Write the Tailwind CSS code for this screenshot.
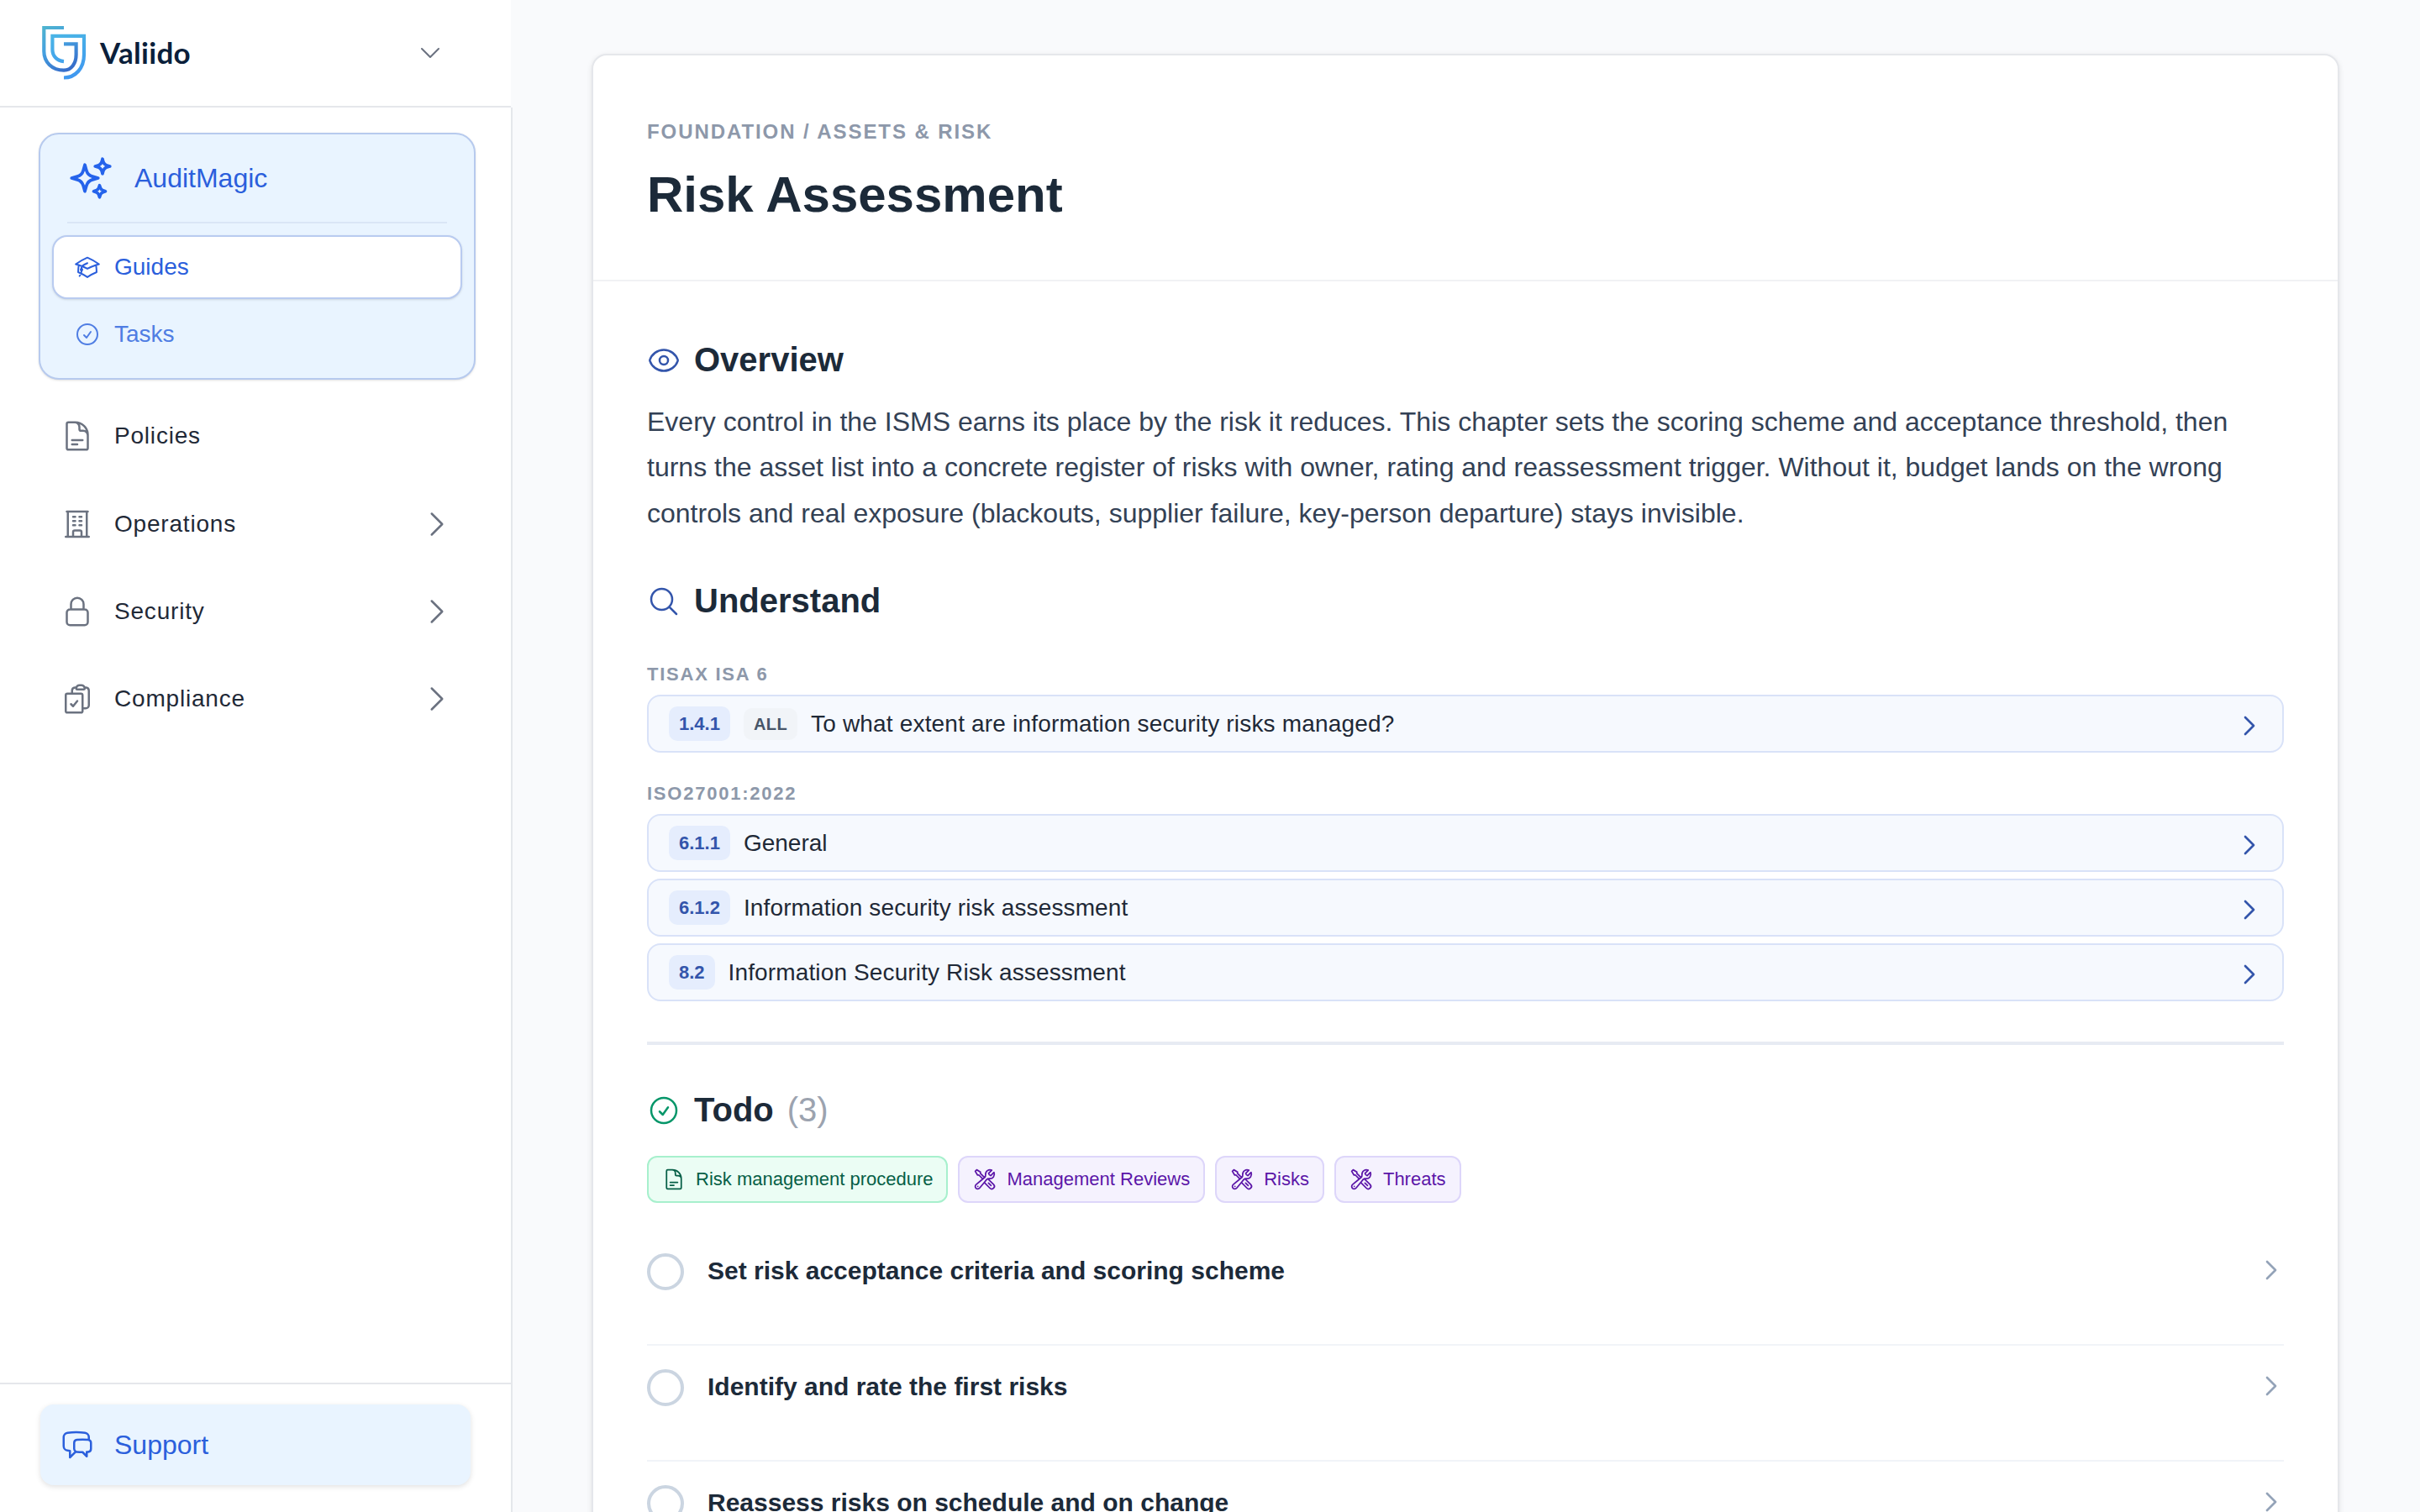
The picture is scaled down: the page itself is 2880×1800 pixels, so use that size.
<!DOCTYPE html>
<html lang="en">
<head>
    <meta charset="UTF-8">
    <meta name="viewport" content="width=device-width, initial-scale=1.0">
    <title>Risk Assessment - Valiido</title>
    <script src="https://cdn.jsdelivr.net/npm/@tailwindcss/browser@4"></script>
</head>
<body class="bg-[#f9fafc] font-['Liberation_Sans',Arial,sans-serif] text-[#1c2a39]">
    <!-- Icon set -->
    <svg class="hidden" xmlns="http://www.w3.org/2000/svg">
        <symbol id="sparkles" viewBox="0 0 24 24"><path d="M9.813 15.904 9 18.75l-.813-2.846a4.5 4.5 0 0 0-3.09-3.09L2.25 12l2.846-.813a4.5 4.5 0 0 0 3.09-3.09L9 5.25l.813 2.846a4.5 4.5 0 0 0 3.09 3.09L15.75 12l-2.846.813a4.5 4.5 0 0 0-3.09 3.09ZM18.259 8.715 18 9.75l-.259-1.035a3.375 3.375 0 0 0-2.455-2.456L14.25 6l1.036-.259a3.375 3.375 0 0 0 2.455-2.456L18 2.25l.259 1.035a3.375 3.375 0 0 0 2.456 2.456L21.75 6l-1.035.259a3.375 3.375 0 0 0-2.456 2.456ZM16.894 20.567 16.5 21.75l-.394-1.183a2.25 2.25 0 0 0-1.423-1.423L13.5 18.75l1.183-.394a2.25 2.25 0 0 0 1.423-1.423l.394-1.183.394 1.183a2.25 2.25 0 0 0 1.423 1.423l1.183.394-1.183.394a2.25 2.25 0 0 0-1.423 1.423Z"/></symbol>
        <symbol id="cap" viewBox="0 0 24 24"><path d="M4.26 10.147a60.438 60.438 0 0 0-.491 6.347A48.62 48.62 0 0 1 12 20.904a48.62 48.62 0 0 1 8.232-4.41 60.46 60.46 0 0 0-.491-6.347m-15.482 0a50.636 50.636 0 0 0-2.658-.813A59.906 59.906 0 0 1 12 3.493a59.903 59.903 0 0 1 10.399 5.84c-.896.248-1.783.52-2.658.814m-15.482 0A50.717 50.717 0 0 1 12 13.489a50.702 50.702 0 0 1 7.74-3.342M6.75 15a.75.75 0 1 0 0-1.5.75.75 0 0 0 0 1.5Zm0 0v-3.675A55.378 55.378 0 0 1 12 8.443m-7.007 11.55A5.981 5.981 0 0 0 6.75 15.75v-1.5"/></symbol>
        <symbol id="check" viewBox="0 0 24 24"><path d="M9 12.75 11.25 15 15 9.75M21 12a9 9 0 1 1-18 0 9 9 0 0 1 18 0Z"/></symbol>
        <symbol id="doc" viewBox="0 0 24 24"><path d="M19.5 14.25v-2.625a3.375 3.375 0 0 0-3.375-3.375h-1.5A1.125 1.125 0 0 1 13.5 7.125v-1.5a3.375 3.375 0 0 0-3.375-3.375H8.25m0 12.75h7.5m-7.5 3H12M10.5 2.25H5.625c-.621 0-1.125.504-1.125 1.125v17.25c0 .621.504 1.125 1.125 1.125h12.75c.621 0 1.125-.504 1.125-1.125V11.25a9 9 0 0 0-9-9Z"/></symbol>
        <symbol id="building" viewBox="0 0 24 24"><path d="M3.75 21h16.5M4.5 3h15M5.25 3v18m13.5-18v18M9 6.75h1.5m-1.5 3h1.5m-1.5 3h1.5m3-6H15m-1.5 3H15m-1.5 3H15M9 21v-3.375c0-.621.504-1.125 1.125-1.125h3.75c.621 0 1.125.504 1.125 1.125V21"/></symbol>
        <symbol id="lock" viewBox="0 0 24 24"><path d="M16.5 10.5V6.75a4.5 4.5 0 1 0-9 0v3.75m-.75 11.25h10.5a2.25 2.25 0 0 0 2.25-2.25v-6.75a2.25 2.25 0 0 0-2.25-2.25H6.75a2.25 2.25 0 0 0-2.25 2.25v6.75a2.25 2.25 0 0 0 2.25 2.25Z"/></symbol>
        <symbol id="clipboard" viewBox="0 0 24 24"><path d="M11.35 3.836c-.065.21-.1.433-.1.664 0 .414.336.75.75.75h4.5a.75.75 0 0 0 .75-.75 2.25 2.25 0 0 0-.1-.664m-5.8 0A2.251 2.251 0 0 1 13.5 2.25H15c1.012 0 1.867.668 2.15 1.586m-5.8 0c-.376.023-.75.05-1.124.08C9.095 4.01 8.25 4.973 8.25 6.108V8.25m8.9-4.414c.376.023.75.05 1.124.08 1.131.094 1.976 1.057 1.976 2.192V16.5A2.25 2.25 0 0 1 18 18.75h-2.25m-7.5-10.5H4.875c-.621 0-1.125.504-1.125 1.125v11.25c0 .621.504 1.125 1.125 1.125h9.75c.621 0 1.125-.504 1.125-1.125V18.75m-7.5-10.5h6.375c.621 0 1.125.504 1.125 1.125v9.375m-8.25-3 1.5 1.5 3-3.75"/></symbol>
        <symbol id="chat" viewBox="0 0 24 24"><path d="M20.25 8.511c.884.284 1.5 1.128 1.5 2.097v4.286c0 1.136-.847 2.1-1.98 2.193-.34.027-.68.052-1.02.072v3.091l-3-3c-1.354 0-2.694-.055-4.02-.163a2.115 2.115 0 0 1-.825-.242m9.345-8.334a2.126 2.126 0 0 0-.476-.095 48.64 48.64 0 0 0-8.048 0c-1.131.094-1.976 1.057-1.976 2.192v4.286c0 .837.46 1.58 1.155 1.951m9.345-8.334V6.637c0-1.621-1.152-3.026-2.76-3.235A48.455 48.455 0 0 0 11.25 3c-2.115 0-4.198.137-6.24.402-1.608.209-2.76 1.614-2.76 3.235v6.226c0 1.621 1.152 3.026 2.76 3.235.577.075 1.157.14 1.74.194V21l4.155-4.155"/></symbol>
        <symbol id="eye" viewBox="0 0 24 24"><path d="M2.036 12.322a1.012 1.012 0 0 1 0-.639C3.423 7.51 7.36 4.5 12 4.5c4.638 0 8.573 3.007 9.963 7.178.07.207.07.431 0 .639C20.577 16.49 16.64 19.5 12 19.5c-4.638 0-8.573-3.007-9.963-7.178Z"/><path d="M15 12a3 3 0 1 1-6 0 3 3 0 0 1 6 0Z"/></symbol>
        <symbol id="search" viewBox="0 0 24 24"><path d="m21 21-5.197-5.197m0 0A7.5 7.5 0 1 0 5.196 5.196a7.5 7.5 0 0 0 10.607 10.607Z"/></symbol>
        <symbol id="tools" viewBox="0 0 24 24"><path d="M11.42 15.17 17.25 21A2.652 2.652 0 0 0 21 17.25l-5.877-5.877M11.42 15.17l2.496-3.03c.317-.384.74-.626 1.208-.766M11.42 15.17l-4.655 5.653a2.548 2.548 0 1 1-3.586-3.586l6.837-5.63m5.108-.233c.55-.164 1.163-.188 1.743-.14a4.5 4.5 0 0 0 4.486-6.336l-3.276 3.277a3.004 3.004 0 0 1-2.25-2.25l3.276-3.276a4.5 4.5 0 0 0-6.336 4.486c.091 1.076-.071 2.264-.904 2.95l-.102.085m-1.745 1.437L5.909 7.5H4.5L2.25 3.75l1.5-1.5L7.5 4.5v1.409l4.26 4.26m-1.745 1.437 1.745-1.437m6.615 8.206L15.75 15.75M4.867 19.125h.008v.008h-.008v-.008Z"/></symbol>
        <symbol id="right" viewBox="0 0 24 24"><path d="m8.25 4.5 7.5 7.5-7.5 7.5"/></symbol>
        <symbol id="down" viewBox="0 0 24 24"><path d="m19.5 8.25-7.5 7.5-7.5-7.5"/></symbol>
    </svg>

    <div class="flex h-[1800px] w-[2880px] overflow-hidden [&_svg]:shrink-0 [&_svg]:[stroke-linecap:round] [&_svg]:[stroke-linejoin:round]">
        <!-- Sidebar -->
        <aside class="flex w-[610px] shrink-0 flex-col">
            <div class="flex h-32 w-[608px] items-start justify-between border-b-2 border-[#e5e7eb] bg-white pr-20 pl-12">
                <div class="flex items-start gap-[14px] pt-7">
                    <svg class="h-[70px] w-14" viewBox="48 28 56 70" fill="none" stroke-width="4.2" style="stroke-linecap:butt;stroke-linejoin:miter">
                        <defs>
                            <linearGradient id="g1" gradientUnits="userSpaceOnUse" x1="52" y1="31" x2="84" y2="84">
                                <stop offset="0" stop-color="#4fb4cf"/>
                                <stop offset=".45" stop-color="#45a0e0"/>
                                <stop offset="1" stop-color="#3569c8"/>
                            </linearGradient>
                            <linearGradient id="g2" gradientUnits="userSpaceOnUse" x1="70" y1="41" x2="84" y2="94">
                                <stop offset="0" stop-color="#4ab4e6"/>
                                <stop offset="1" stop-color="#3f97f0"/>
                            </linearGradient>
                        </defs>
                        <path stroke="url(#g1)" d="M76 33H52.3V61C52.3 74 62 83.6 76 83.6C85 83.6 90.6 75.500 90.6 65V52.300H76"/>
                        <path stroke="url(#g2)" d="M76 73.200C68 72.500 62.400 67 62.400 59V42.900H100V65C100 81 90 92.500 76 92.500"/>
                    </svg>
                    <span class="pt-2.5 pl-px font-['Lato',sans-serif] text-[35px] leading-[48px] font-bold tracking-[0.3px] text-[#0b1f3b]">Valiido</span>
                </div>
                <svg class="mt-[47px] size-8 text-[#6b7280]" fill="none" stroke="currentColor" stroke-width="1.5"><use href="#down"/></svg>
            </div>

            <div class="flex flex-1 flex-col border-r-2 border-[#e5e7eb] bg-white">
                <nav class="flex flex-1 flex-col pt-[30px]">
                    <div class="mr-[42px] ml-[46px] h-[294px] rounded-[24px] border-2 border-[#b7caee] bg-[#e9f4ff] px-[14px] text-[#2b5fdc] shadow-sm">
                        <div class="mx-[18px] flex h-[106px] items-center gap-6 border-b-2 border-[#dae6f6] text-[32px]">
                            <svg class="size-14 text-[#2563eb]" fill="none" stroke="currentColor" stroke-width="1.6"><use href="#sparkles"/></svg>
                            AuditMagic
                        </div>
                        <a class="mt-[14px] flex h-19 items-center gap-4 rounded-[18px] border-2 border-[#b9cbf0] bg-white px-6 text-[28px] shadow-sm">
                            <svg class="size-8" fill="none" stroke="currentColor" stroke-width="1.5"><use href="#cap"/></svg>
                            Guides
                        </a>
                        <a class="mt-1 flex h-19 items-center gap-4 px-[26px] text-[28px] text-[#4f7de3]">
                            <svg class="size-8" fill="none" stroke="currentColor" stroke-width="1.5"><use href="#check"/></svg>
                            Tasks
                        </a>
                    </div>

                    <div class="mt-[15px] flex flex-col pr-[68px] pl-18 text-[28px] tracking-[0.8px] text-[#1f2937] [&_svg]:text-[#6b7280]">
                        <a class="mb-px flex h-26 items-center gap-6">
                            <svg class="size-10" fill="none" stroke="currentColor" stroke-width="1.5"><use href="#doc"/></svg>
                            Policies
                        </a>
                        <a class="flex h-26 items-center gap-6">
                            <svg class="size-10" fill="none" stroke="currentColor" stroke-width="1.5"><use href="#building"/></svg>
                            Operations
                            <svg class="ml-auto size-10" fill="none" stroke="currentColor" stroke-width="1.5"><use href="#right"/></svg>
                        </a>
                        <a class="flex h-26 items-center gap-6">
                            <svg class="size-10" fill="none" stroke="currentColor" stroke-width="1.5"><use href="#lock"/></svg>
                            Security
                            <svg class="ml-auto size-10" fill="none" stroke="currentColor" stroke-width="1.5"><use href="#right"/></svg>
                        </a>
                        <a class="flex h-26 items-center gap-6">
                            <svg class="size-10" fill="none" stroke="currentColor" stroke-width="1.5"><use href="#clipboard"/></svg>
                            Compliance
                            <svg class="ml-auto size-10" fill="none" stroke="currentColor" stroke-width="1.5"><use href="#right"/></svg>
                        </a>
                    </div>
                </nav>

                <div class="h-[154px] border-t-2 border-[#e5e7eb] px-12 pt-6">
                    <a class="flex h-24 items-center gap-6 rounded-2xl bg-[#e9f4ff] px-6 text-[32px] text-[#2b5fdc] shadow-[0_2px_6px_rgba(0,0,0,0.12)]">
                        <svg class="size-10" fill="none" stroke="currentColor" stroke-width="1.5"><use href="#chat"/></svg>
                        Support
                    </a>
                </div>
            </div>
        </aside>

        <!-- Content -->
        <main class="flex-1 pt-16 pr-24 pl-[94px]">
            <article class="h-[1900px] rounded-[18px] border-2 border-[#e5e7eb] bg-white shadow-[0_2px_6px_rgba(0,0,0,0.10)]">
                <header class="h-[269px] border-b-2 border-[#f1f2f4] px-16 pt-[73px]">
                    <p class="text-2xl leading-9 font-bold tracking-[0.08em] text-[#8d98aa]">FOUNDATION / ASSETS &amp; RISK</p>
                    <h1 class="mt-[21px] text-[60px] leading-[72px] font-bold">Risk Assessment</h1>
                </header>

                <div class="px-16 pt-[70px]">
                    <h2 class="flex h-12 items-center gap-4 text-[40px] leading-[48px] font-bold">
                        <svg class="size-10 text-[#3355ab]" fill="none" stroke="currentColor" stroke-width="1.5"><use href="#eye"/></svg>
                        <span class="-mt-0.5">Overview</span>
                    </h2>
                    <p class="mt-[22px] text-[32px] leading-[54.4px] text-[#334155]">
                        Every control in the ISMS earns its place by the risk it reduces. This chapter sets the scoring scheme and acceptance threshold, then turns the asset list into a concrete register of risks with owner, rating and reassessment trigger. Without it, budget lands on the wrong controls and real exposure (blackouts, supplier failure, key-person departure) stays invisible.
                    </p>

                    <h2 class="mt-[54px] flex h-12 items-center gap-4 text-[40px] leading-[48px] font-bold">
                        <svg class="size-10 text-[#3355ab]" fill="none" stroke="currentColor" stroke-width="1.5"><use href="#search"/></svg>
                        <span class="-mt-0.5">Understand</span>
                    </h2>

                    <h3 class="mt-[46px] text-[22px] leading-[33px] font-bold tracking-[0.08em] text-[#8d98aa]">TISAX ISA 6</h3>
                    <div class="mt-2 flex h-[69px] items-center gap-4 rounded-2xl border-2 border-[#d9e2f8] bg-[#f6f9fe] px-6 text-[28px] text-[#1f2937]">
                        <span class="rounded-[10px] bg-[#e5edfd] px-3 py-1 text-[22px] leading-[33px] font-bold text-[#3355ab]">1.4.1</span>
                        <span class="rounded-[10px] bg-[#f1f4f8] px-3 py-1 text-[20px] leading-[30px] font-bold tracking-[0.02em] text-[#475569]">ALL</span>
                        <span class="tracking-[0.18px]">To what extent are information security risks managed?</span>
                        <svg class="mt-[5px] -mr-px ml-auto size-8 text-[#3355ab]" fill="none" stroke="currentColor" stroke-width="2"><use href="#right"/></svg>
                    </div>

                    <h3 class="mt-8 text-[22px] leading-[33px] font-bold tracking-[0.08em] text-[#8d98aa]">ISO27001:2022</h3>
                    <div class="mt-2 flex flex-col gap-2 text-[28px] text-[#1f2937]">
                        <div class="flex h-[69px] items-center gap-4 rounded-2xl border-2 border-[#d9e2f8] bg-[#f6f9fe] px-6">
                            <span class="rounded-[10px] bg-[#e5edfd] px-3 py-1 text-[22px] leading-[33px] font-bold text-[#3355ab]">6.1.1</span>
                            General
                            <svg class="mt-[5px] -mr-px ml-auto size-8 text-[#3355ab]" fill="none" stroke="currentColor" stroke-width="2"><use href="#right"/></svg>
                        </div>
                        <div class="flex h-[69px] items-center gap-4 rounded-2xl border-2 border-[#d9e2f8] bg-[#f6f9fe] px-6">
                            <span class="rounded-[10px] bg-[#e5edfd] px-3 py-1 text-[22px] leading-[33px] font-bold text-[#3355ab]">6.1.2</span>
                            <span class="tracking-[0.13px]">Information security risk assessment</span>
                            <svg class="mt-[5px] -mr-px ml-auto size-8 text-[#3355ab]" fill="none" stroke="currentColor" stroke-width="2"><use href="#right"/></svg>
                        </div>
                        <div class="flex h-[69px] items-center gap-4 rounded-2xl border-2 border-[#d9e2f8] bg-[#f6f9fe] px-6">
                            <span class="rounded-[10px] bg-[#e5edfd] px-3 py-1 text-[22px] leading-[33px] font-bold text-[#3355ab]">8.2</span>
                            <span class="tracking-[0.13px]">Information Security Risk assessment</span>
                            <svg class="mt-[5px] -mr-px ml-auto size-8 text-[#3355ab]" fill="none" stroke="currentColor" stroke-width="2"><use href="#right"/></svg>
                        </div>
                    </div>

                    <hr class="mt-12 border-t-4 border-[#e7ebf3]">

                    <h2 class="mt-[54px] flex h-12 items-center gap-4 text-[40px] leading-[48px] font-bold">
                        <svg class="size-10 text-[#059669]" fill="none" stroke="currentColor" stroke-width="1.5"><use href="#check"/></svg>
                        <span class="-mt-0.5">Todo</span>
                        <span class="-mt-0.5 font-normal text-[#9ca3af]">(3)</span>
                    </h2>

                    <div class="mt-[30px] flex h-14 gap-3 text-[22px] text-[#5b16a8]">
                        <div class="flex items-center gap-3 rounded-xl border-2 border-[#a7f0cd] bg-[#ebfdf4] px-4 text-[#065f46]">
                            <svg class="size-7" fill="none" stroke="currentColor" stroke-width="1.5"><use href="#doc"/></svg>
                            <span class="-mt-0.5">Risk management procedure</span>
                        </div>
                        <div class="flex items-center gap-3 rounded-xl border-2 border-[#ddd6fa] bg-[#f5f2fe] px-4">
                            <svg class="size-7" fill="none" stroke="currentColor" stroke-width="1.5"><use href="#tools"/></svg>
                            <span class="-mt-0.5">Management Reviews</span>
                        </div>
                        <div class="flex items-center gap-3 rounded-xl border-2 border-[#ddd6fa] bg-[#f5f2fe] px-4">
                            <svg class="size-7" fill="none" stroke="currentColor" stroke-width="1.5"><use href="#tools"/></svg>
                            <span class="-mt-0.5">Risks</span>
                        </div>
                        <div class="flex items-center gap-3 rounded-xl border-2 border-[#ddd6fa] bg-[#f5f2fe] px-4">
                            <svg class="size-7" fill="none" stroke="currentColor" stroke-width="1.5"><use href="#tools"/></svg>
                            <span class="-mt-0.5">Threats</span>
                        </div>
                    </div>

                    <ul class="mt-8 text-[30px] leading-[45px] font-bold">
                        <li class="flex h-[138px] items-start gap-7 border-b-2 border-[#f1f4f8] pt-7">
                            <span class="size-11 rounded-full border-4 border-[#cbd5e1]"></span>
                            <span class="-mt-0.5">Set risk acceptance criteria and scoring scheme</span>
                            <svg class="mt-1 -mr-px ml-auto size-8 text-[#94a3b8]" fill="none" stroke="currentColor" stroke-width="2"><use href="#right"/></svg>
                        </li>
                        <li class="flex h-[138px] items-start gap-7 border-b-2 border-[#f1f4f8] pt-7">
                            <span class="size-11 rounded-full border-4 border-[#cbd5e1]"></span>
                            <span class="-mt-0.5">Identify and rate the first risks</span>
                            <svg class="mt-1 -mr-px ml-auto size-8 text-[#94a3b8]" fill="none" stroke="currentColor" stroke-width="2"><use href="#right"/></svg>
                        </li>
                        <li class="flex h-[138px] items-start gap-7 pt-7">
                            <span class="size-11 rounded-full border-4 border-[#cbd5e1]"></span>
                            <span class="-mt-0.5">Reassess risks on schedule and on change</span>
                            <svg class="mt-1 -mr-px ml-auto size-8 text-[#94a3b8]" fill="none" stroke="currentColor" stroke-width="2"><use href="#right"/></svg>
                        </li>
                    </ul>
                </div>
            </article>
        </main>
    </div>
</body>
</html>
